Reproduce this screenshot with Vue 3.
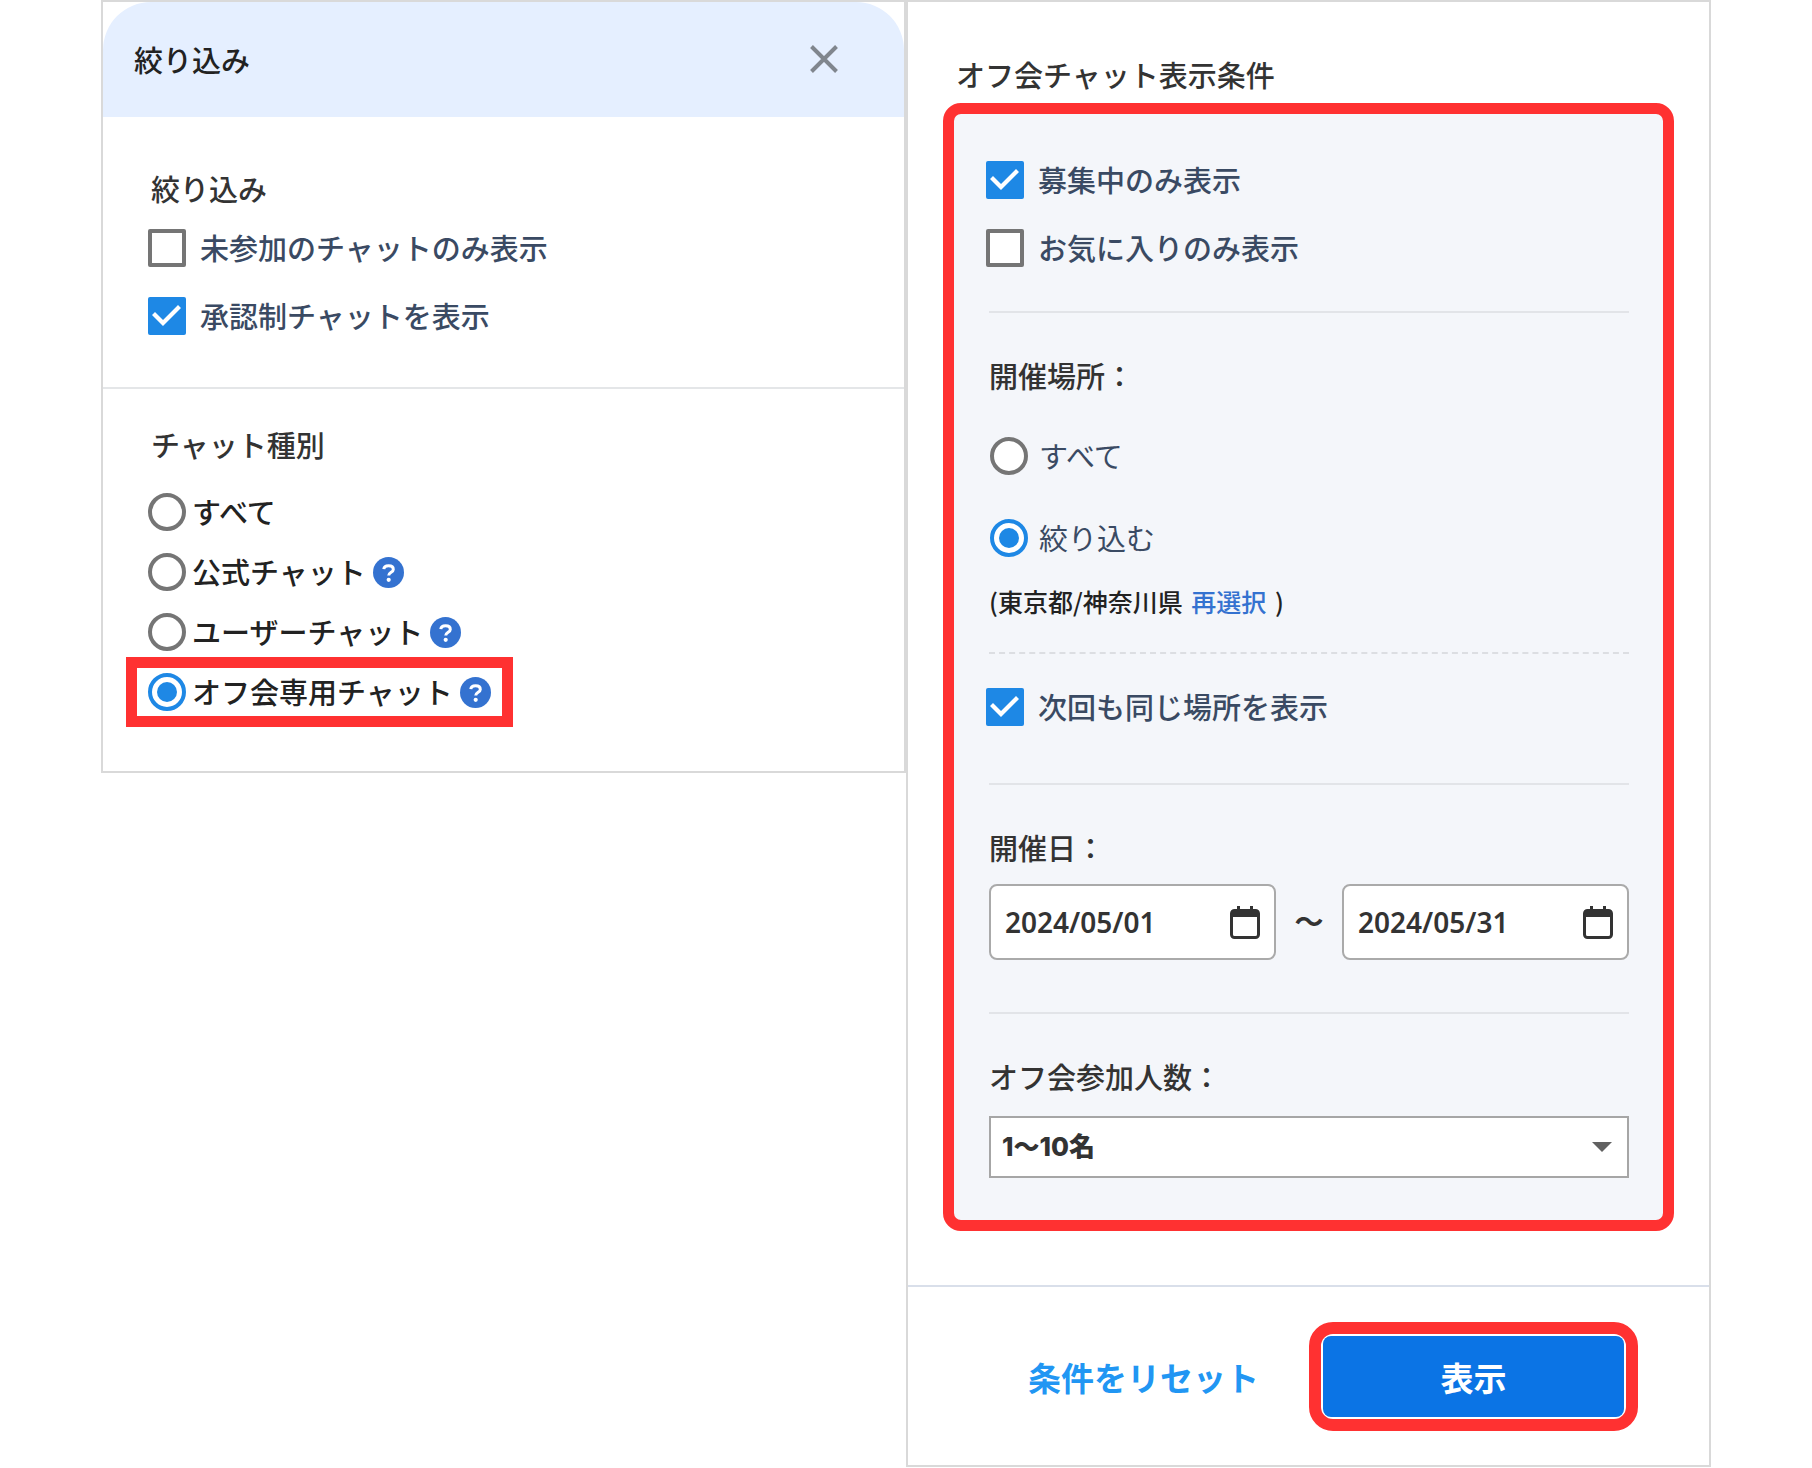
<template>
  <main class="page">
    <section class="panel">
      <header class="panel-header">
        <h1 class="panel-title">絞り込み</h1>
        <button class="close-button" type="button" aria-label="閉じる">
          <svg viewBox="0 0 28 28" aria-hidden="true">
            <path d="M1.5 1.5 26.5 26.5M26.5 1.5 1.5 26.5" />
          </svg>
        </button>
      </header>

      <div class="filter-section">
        <h2 class="heading">絞り込み</h2>
        <div class="check-list">
          <label v-for="item in chatFilters" :key="item.label" class="check-row">
            <input v-model="item.checked" class="checkbox" type="checkbox" />
            <span>{{ item.label }}</span>
          </label>
        </div>
      </div>

      <div class="type-section">
        <h2 class="heading">チャット種別</h2>
        <div class="type-list">
          <div
            v-for="type in chatTypes"
            :key="type.value"
            class="type-row"
            :class="{ 'is-highlighted': type.value === chatType }"
          >
            <label class="type-label">
              <input v-model="chatType" class="radio" type="radio" name="chat-type" :value="type.value" />
              <span>{{ type.label }}</span>
            </label>
            <button v-if="type.help" class="help-button" type="button" :aria-label="`${type.label}について`">
              <svg viewBox="0 0 31 31" aria-hidden="true">
                <path d="M10.8 12.2C11 9.6 12.9 8.8 15.6 8.8c2.9 0 4.7 1.3 4.7 3.6 0 2.9-4.6 2.9-4.6 6.2" />
                <circle cx="15.7" cy="22.8" r="2.1" />
              </svg>
            </button>
          </div>
        </div>
      </div>
    </section>

    <section class="panel">
      <div class="condition-section">
        <h2 class="heading condition-heading">オフ会チャット表示条件</h2>

        <div class="condition-box">
          <div class="check-list">
            <label v-for="item in meetFilters" :key="item.label" class="check-row">
              <input v-model="item.checked" class="checkbox" type="checkbox" />
              <span>{{ item.label }}</span>
            </label>
          </div>

          <hr class="divider divider-check" />

          <h3 class="heading">開催場所：</h3>
          <div class="place-list">
            <label class="place-row">
              <input v-model="place" class="radio" type="radio" name="place" value="all" />
              <span>すべて</span>
            </label>
            <label class="place-row">
              <input v-model="place" class="radio" type="radio" name="place" value="select" />
              <span>絞り込む</span>
            </label>
          </div>
          <p class="place-selected">(東京都/神奈川県 <a href="#">再選択</a> )</p>

          <hr class="dashed" />

          <label class="check-row">
            <input v-model="keepPlace" class="checkbox" type="checkbox" />
            <span>次回も同じ場所を表示</span>
          </label>

          <hr class="divider divider-place" />

          <h3 class="heading">開催日：</h3>
          <div class="date-range">
            <template v-for="(date, index) in dates" :key="date.label">
              <span v-if="index > 0" class="date-separator">〜</span>
              <div class="date-field">
                <input v-model="date.value" class="date-input" type="text" :aria-label="date.label" />
                <button class="date-button" type="button" :aria-label="`${date.label}を選択`">
                  <svg viewBox="0 0 30 34" aria-hidden="true">
                    <path d="M8.5 1v5M21.5 1v5" class="calendar-ring" />
                    <rect x="1.5" y="5.5" width="27" height="27" rx="3" class="calendar-frame" />
                    <path d="M1 12V8q0-3 3-3h22q3 0 3 3v4Z" />
                  </svg>
                </button>
              </div>
            </template>
          </div>

          <hr class="divider divider-date" />

          <h3 class="heading"><label for="member-count">オフ会参加人数：</label></h3>
          <div class="select-field">
            <select id="member-count" v-model="memberCount" class="select">
              <option value="1-10">1〜10名</option>
            </select>
            <svg class="select-arrow" viewBox="0 0 20 10" aria-hidden="true">
              <path d="M0 0h20L10 10Z" />
            </svg>
          </div>
        </div>
      </div>

      <footer class="panel-footer">
        <button class="reset-button" type="button">条件をリセット</button>
        <div class="submit-frame">
          <button class="submit-button" type="button">表示</button>
        </div>
      </footer>
    </section>
  </main>
</template>

<script setup>
import { ref } from 'vue'

const chatFilters = ref([
  { label: '未参加のチャットのみ表示', checked: false },
  { label: '承認制チャットを表示', checked: true }
])

const chatTypes = [
  { value: 'all', label: 'すべて', help: false },
  { value: 'official', label: '公式チャット', help: true },
  { value: 'user', label: 'ユーザーチャット', help: true },
  { value: 'meet', label: 'オフ会専用チャット', help: true }
]
const chatType = ref('meet')

const meetFilters = ref([
  { label: '募集中のみ表示', checked: true },
  { label: 'お気に入りのみ表示', checked: false }
])

const place = ref('select')
const keepPlace = ref(true)

const dates = ref([
  { label: '開始日', value: '2024/05/01' },
  { label: '終了日', value: '2024/05/31' }
])

const memberCount = ref('1-10')
</script>

<style>
body {
  background: #fff;
}
</style>

<style scoped>
.page {
  display: grid;
  grid-template-columns: repeat(2, minmax(0, 1fr));
  align-items: start;
  padding: 0 101px;
  font-family: 'Noto Sans CJK JP', sans-serif;
  font-size: 29px;
  font-weight: 500;
  line-height: 44px;
  color: #222;
}

.page *,
.page *::before {
  box-sizing: border-box;
}

button,
input,
select {
  margin: 0;
  padding: 0;
  border: 0;
  background: none;
  font: inherit;
  color: inherit;
}

button {
  cursor: pointer;
}

svg {
  display: block;
}

.panel {
  border: 2px solid #d9d9d9;
}

.panel-header {
  display: flex;
  align-items: center;
  justify-content: space-between;
  height: 115px;
  padding: 0 66px 2px 31px;
  border-radius: 48px 48px 0 0;
  background: #e5efff;
}

.panel-title,
.heading {
  margin: 0;
  font-size: 29px;
  font-weight: 500;
  line-height: 44px;
}

.heading {
  padding-bottom: 2px;
  line-height: 42px;
  color: #333;
}

.close-button svg {
  width: 28px;
  height: 28px;
  fill: none;
  stroke: #80868e;
  stroke-width: 4;
}

.filter-section {
  padding: 50px 45px 52px;
  border-bottom: 2px solid #e4e6e8;
}

.type-section {
  padding: 34px 45px 55px;
}

.filter-section .heading,
.type-section .heading {
  padding-left: 3px;
}

.check-list {
  display: flex;
  flex-direction: column;
  gap: 30px;
}

.filter-section .check-list {
  margin-top: 18px;
}

.check-row {
  display: flex;
  align-items: center;
  gap: 14px;
  height: 38px;
  color: #3a4a63;
}

.check-row span,
.place-row span,
.type-label span {
  padding-bottom: 2px;
}

.checkbox,
.radio {
  flex: none;
  display: grid;
  place-items: center;
  width: 38px;
  height: 38px;
  border: 4px solid #757575;
  background: #fff;
  appearance: none;
}

.checkbox {
  border-radius: 2px;
}

.checkbox:checked {
  border: 0;
  background: #1e88e5;
}

.checkbox:checked::before {
  content: '';
  width: 38px;
  height: 38px;
  background: #fff;
  clip-path: polygon(4px 18px, 7px 15px, 15px 23px, 30px 8px, 33px 11px, 15px 29px);
}

.radio {
  border-radius: 50%;
}

.radio:checked {
  border-color: #1e88e5;
}

.radio:checked::before {
  content: '';
  width: 20px;
  height: 20px;
  border-radius: 50%;
  background: #1e88e5;
}

.type-list {
  display: flex;
  flex-direction: column;
  align-items: flex-start;
  gap: 12px;
  margin: 21px -11px 0;
}

.type-row {
  display: flex;
  align-items: center;
  gap: 7px;
  height: 48px;
  padding: 0 11px;
}

.type-row.is-highlighted {
  outline: 11px solid #ff3131;
}

.type-label {
  display: flex;
  align-items: center;
  gap: 6px;
}

.help-button {
  width: 31px;
  height: 31px;
  border-radius: 50%;
  background: #3472d0;
}

.help-button path {
  fill: none;
  stroke: #fff;
  stroke-width: 3;
}

.help-button circle {
  fill: #fff;
}

.condition-section {
  padding: 51px 35px 54px;
}

.condition-heading {
  padding-left: 13px;
}

.condition-box {
  margin-top: 6px;
  padding: 47px 34px 42px 35px;
  border: 11px solid #ff3131;
  border-radius: 18px;
  background: #f4f6fa;
}

.condition-box .check-row {
  margin-left: -3px;
}

.divider {
  height: 2px;
  margin: 0 0 41px;
  border: 0;
  background: #e2e4e8;
}

.divider-check {
  margin-top: 44px;
}

.divider-place {
  margin-top: 57px;
}

.divider-date {
  margin-top: 52px;
}

.place-list {
  display: flex;
  flex-direction: column;
  gap: 44px;
  margin: 39px 0 22px 1px;
}

.place-row {
  display: flex;
  align-items: center;
  gap: 11px;
  height: 38px;
  font-weight: 400;
  color: #3a4a63;
}

.place-selected {
  margin: 0;
  font-size: 25px;
}

.place-selected a {
  margin: 0 3px;
  color: #3472d0;
  text-decoration: none;
}

.dashed {
  margin: 29px 0 34px;
  border: 0;
  border-top: 2px dashed #dcdee2;
}

.date-range {
  display: flex;
  align-items: center;
  margin-top: 14px;
  color: #333;
}

.date-separator {
  flex: none;
  width: 66px;
  padding-bottom: 4px;
  font-weight: 700;
  text-align: center;
}

.date-field {
  flex: 1;
  display: flex;
  align-items: center;
  min-width: 0;
  height: 76px;
  padding: 0 14px;
  border: 2px solid #aaa;
  border-radius: 8px;
  background: #fff;
}

.date-input {
  flex: 1;
  min-width: 0;
  font-family: 'Noto Sans', 'Noto Sans CJK JP', sans-serif;
  font-size: 28px;
  font-weight: 600;
}

.date-button svg {
  width: 30px;
  height: 34px;
  fill: #333;
}

.calendar-ring,
.calendar-frame {
  fill: none;
  stroke: #333;
  stroke-width: 3;
}

.select-field {
  display: grid;
  align-items: center;
  margin-top: 17px;
}

.select,
.select-arrow {
  grid-area: 1 / 1;
}

.select {
  height: 62px;
  padding: 0 44px 0 11px;
  border: 2px solid #a6a6a6;
  border-radius: 0;
  background: #fff;
  font-family: Inter, 'Noto Sans CJK JP', sans-serif;
  font-size: 26px;
  font-weight: 800;
  color: #333;
  appearance: none;
}

.select-arrow {
  justify-self: end;
  width: 20px;
  height: 10px;
  margin-right: 17px;
  fill: #616161;
  pointer-events: none;
}

.panel-footer {
  display: flex;
  align-items: center;
  justify-content: flex-end;
  gap: 50px;
  padding: 35px 71px 34px;
  border-top: 2px solid #d9dfea;
}

.reset-button,
.submit-button {
  font-size: 33px;
  font-weight: 700;
}

.reset-button {
  color: #2196f3;
}

.submit-frame {
  display: flex;
  width: 329px;
  height: 109px;
  padding: 2px;
  border: 12px solid #ff3131;
  border-radius: 24px;
  background: #fff;
}

.submit-button {
  flex: 1;
  border-radius: 8px;
  background: #0b74e5;
  color: #fff;
}
</style>
